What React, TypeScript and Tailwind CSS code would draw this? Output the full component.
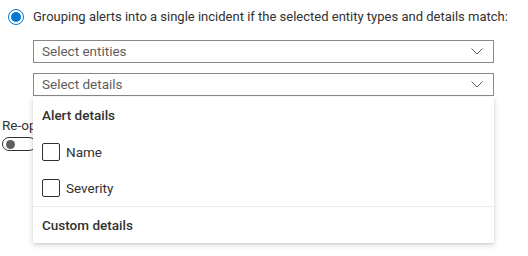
function Chevron() {
  return (
    <svg width="12" height="7" viewBox="0 0 12 7" className="shrink-0 text-[#605e5c]">
      <path d="M0.5 0.5l5.5 5.5 5.5-5.5" fill="none" stroke="currentColor" strokeWidth="1" />
    </svg>
  );
}

function Dropdown({ placeholder, className = "" }: { placeholder: string; className?: string }) {
  return (
    <div
      className={`flex h-[23px] w-[461px] items-center justify-between border border-[#8a8886] bg-white pl-[8px] pr-[10px] ${className}`}
    >
      <span className="text-[13.5px] text-[#605e5c]">{placeholder}</span>
      <Chevron />
    </div>
  );
}

function CheckRow({ label }: { label: string }) {
  return (
    <div className="flex h-[36px] items-center gap-[6px] px-[9px]">
      <span className="h-[18px] w-[18px] shrink-0 rounded-[2px] border border-[#323130] bg-white" />
      <span className="text-[13.5px] text-[#323130]">{label}</span>
    </div>
  );
}

export default function App() {
  return (
    <div className="relative h-[256px] w-[528px] bg-white font-['Roboto',sans-serif] text-[#323130]">
      <div className="flex items-center gap-[9px] pl-[8px] pt-[8px]">
        <span className="flex h-[16px] w-[16px] shrink-0 items-center justify-center rounded-full border border-[#0078d4]">
          <span className="h-[10px] w-[10px] rounded-full bg-[#0078d4]" />
        </span>
        <span className="whitespace-nowrap text-[13px] leading-[17px]">
          Grouping alerts into a single incident if the selected entity types and details match:
        </span>
      </div>

      <div className="ml-[33px] mt-[15px]">
        <Dropdown placeholder="Select entities" />
        <Dropdown placeholder="Select details" className="mt-[10px]" />
      </div>

      <div className="pl-[2px] pt-[20px]">
        <div className="whitespace-nowrap text-[13.5px] leading-[18px]">Re-open closed matching incidents</div>
        <div className="mt-[3px] flex h-[14px] w-[34px] items-center rounded-full border border-[#323130] px-[3px]">
          <span className="h-[9px] w-[9px] rounded-full bg-[#605e5c]" />
        </div>
      </div>

      <div className="absolute left-[33px] top-[97px] w-[461px] bg-white shadow-[0_2px_6px_rgba(0,0,0,0.16),0_1px_2px_rgba(0,0,0,0.08)]">
        <div className="flex h-[37px] items-center px-[9px] text-[13.5px] font-medium">Alert details</div>
        <CheckRow label="Name" />
        <CheckRow label="Severity" />
        <div className="border-t border-[#edebe9]" />
        <div className="flex h-[36px] items-center px-[9px] text-[13.5px] font-medium">Custom details</div>
      </div>
    </div>
  );
}
